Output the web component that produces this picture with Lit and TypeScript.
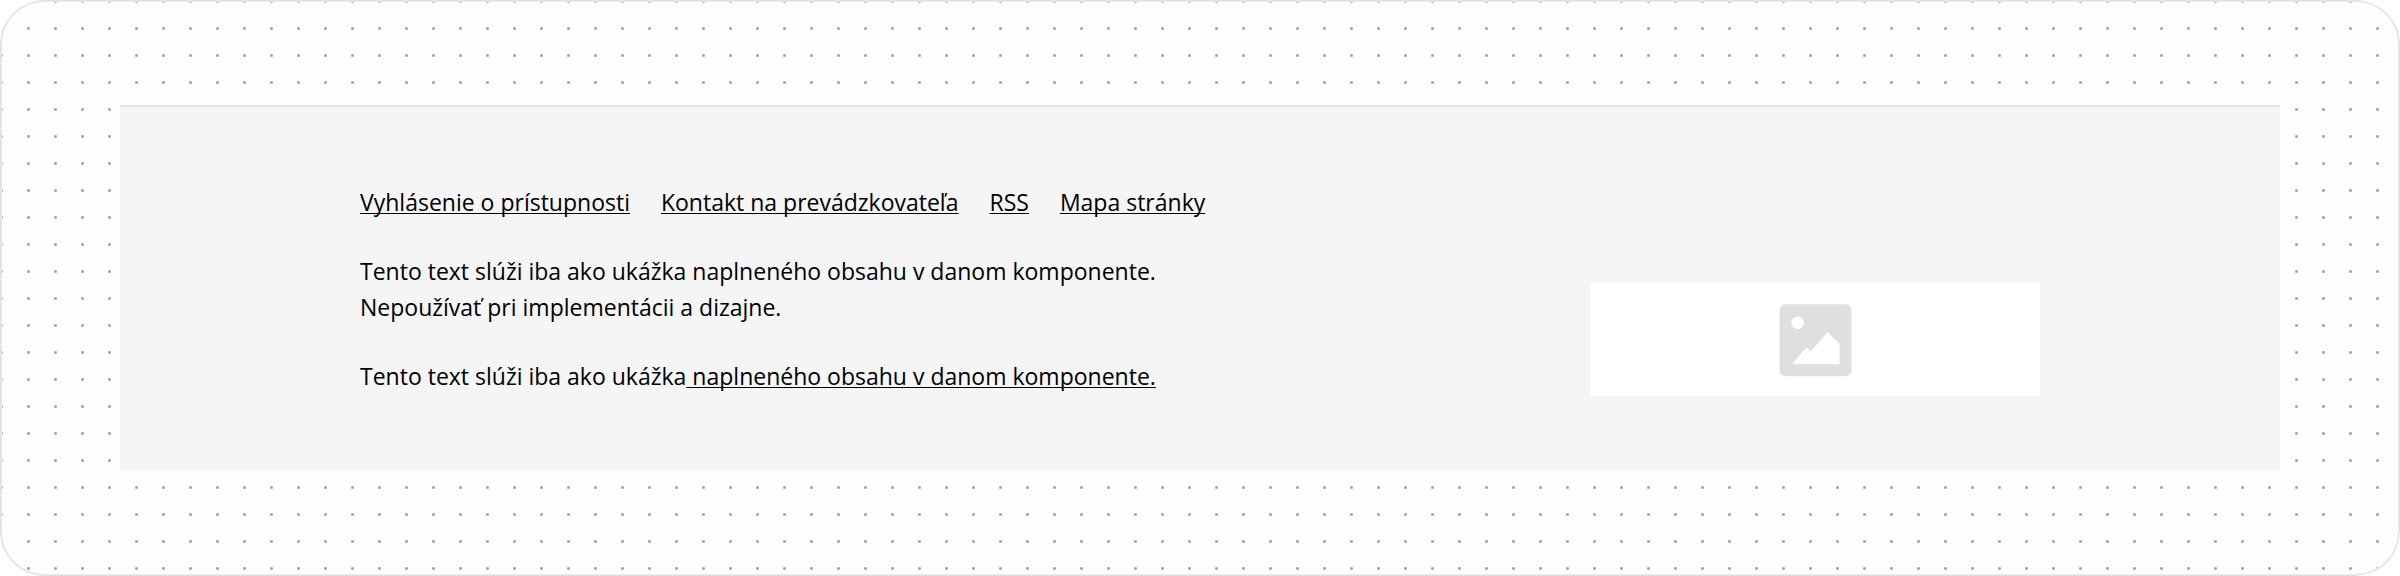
import { LitElement, html, css } from "lit";
import { customElement } from "lit/decorators.js";

const LINKS = ["Vyhlásenie o prístupnosti", "Kontakt na prevádzkovateľa", "RSS", "Mapa stránky"];

@customElement("site-footer")
class SiteFooter extends LitElement {
  static styles = css`
    :host {
      display: block;
    }
    .footer {
      display: flex;
      justify-content: space-between;
      align-items: flex-end;
      gap: 48px;
      padding: 78px 240px 75px;
      background: #f5f5f5;
      border-top: 1px solid #dfdfdf;
      box-shadow: inset 0 1px #e6e6e6;
    }
    .content {
      display: grid;
      gap: 33px;
      padding-bottom: 2px;
    }
    .links {
      display: flex;
      flex-wrap: wrap;
      gap: 0 31px;
      margin: 0;
      padding: 0;
      list-style: none;
    }
    p {
      margin: 0;
    }
    a {
      color: inherit;
      text-decoration: underline;
      text-decoration-thickness: 1px;
      text-underline-offset: 2px;
      text-decoration-skip-ink: none;
    }
    .logo {
      display: flex;
      flex: 0 0 450px;
      align-items: center;
      justify-content: center;
      height: 113px;
      background: #fff;
    }
    .icon {
      display: block;
      width: 74px;
      height: 74px;
    }
  `;

  render() {
    return html`
      <footer class="footer">
        <div class="content">
          <ul class="links">
            ${LINKS.map((label) => html`<li><a href="#">${label}</a></li>`)}
          </ul>
          <p>
            Tento text slúži iba ako ukážka naplneného obsahu v danom komponente.<br />
            Nepoužívať pri implementácii a dizajne.
          </p>
          <p>Tento text slúži iba ako ukážka<a href="#"> naplneného obsahu v danom komponente.</a></p>
        </div>
        <div class="logo">
          <svg class="icon" viewBox="0 0 74 74" aria-hidden="true">
            <rect x="1.500" y="1.300" width="72" height="72" rx="6" fill="#dedfe1" />
            <circle cx="19.600" cy="19.800" r="6.300" fill="#fff" />
            <path d="M14 61.200 28.600 44 32.600 48.500 49.600 29 61.600 40.700V61.200Z" fill="#fff" />
          </svg>
        </div>
      </footer>
    `;
  }
}

@customElement("app-root")
class AppRoot extends LitElement {
  static styles = css`
    :host {
      display: block;
      background: #fff;
      color: #000;
      font: 23px/36px "Open Sans", "Noto Sans", sans-serif;
    }
    .stage {
      box-sizing: border-box;
      min-height: 100vh;
      padding: 105px 5%;
      border-radius: 45px;
      box-shadow: inset 0 0 0 1px #dedede, inset 0 0 0 2px #eeeeee;
      background: radial-gradient(circle, #a8a8a8 1px, transparent 2px) 15px 15px / 27px 27px #fdfdfd;
    }
  `;

  render() {
    return html`<main class="stage"><site-footer></site-footer></main>`;
  }
}
